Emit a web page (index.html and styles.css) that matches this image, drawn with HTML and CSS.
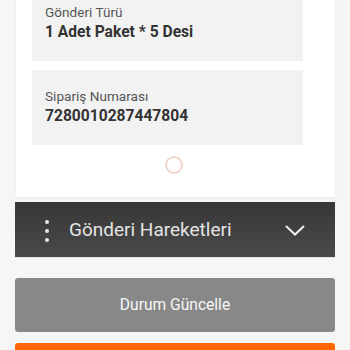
FILE: index.html
```html
<!DOCTYPE html>
<html lang="tr">
<head>
<meta charset="utf-8">
<link rel="stylesheet" href="styles.css">
</head>
<body>
<div class="page">
  <div class="card">
    <div class="info">
      <div class="label">Gönderi Türü</div>
      <div class="value">1 Adet Paket * 5 Desi</div>
    </div>
    <div class="info">
      <div class="label">Sipariş Numarası</div>
      <div class="value">7280010287447804</div>
    </div>
    <div class="spinner-row"><div class="spinner"></div></div>
  </div>
  <div class="accordion">
    <div class="kebab"><span></span><span></span><span></span></div>
    <div class="acc-title">Gönderi Hareketleri</div>
    <svg class="chevron" width="20" height="11" viewBox="0 0 20 11"><path d="M1 1 L10 9.5 L19 1" fill="none" stroke="#f0f0f0" stroke-width="2"/></svg>
  </div>
  <div class="btn-gray">Durum Güncelle</div>
  <div class="btn-orange"></div>
</div>
</body>
</html>
```
FILE: styles.css
```css
html, body {
  margin: 0;
  padding: 0;
  background: #f6f6f6;
  font-family: Roboto, "Liberation Sans", sans-serif;
  overflow: hidden;
}
.page {
  padding: 0 15px;
  display: flex;
  flex-direction: column;
}
.card {
  background: #fff;
  margin: -14px 0 0 1px;
  padding: 0 32px 23px 16px;
  display: flex;
  flex-direction: column;
  gap: 9px;
  box-shadow: 0 1px 3px rgba(0,0,0,0.05);
}
.info {
  background: #f2f2f2;
  padding: 17px 13px 18px;
}
.label {
  font-size: 13.6px;
  line-height: 18px;
  color: #555;
}
.value {
  font-size: 15.6px;
  line-height: 22px;
  font-weight: 700;
  color: #333;
}
.spinner-row {
  display: flex;
  justify-content: center;
  padding-top: 2px;
  padding-left: 12px;
}
.spinner {
  width: 14px;
  height: 14px;
  border: 2px solid #efd6c9;
  border-radius: 50%;
}
.accordion {
  margin-top: 5px;
  height: 56px;
  background: linear-gradient(#373737, #4a4a4a);
  display: flex;
  align-items: center;
  padding: 0 30px 0 30px;
  border-bottom: 1px solid #e2e2e2;
  box-sizing: border-box;
}
.kebab {
  display: flex;
  flex-direction: column;
  gap: 5px;
  width: 4px;
  margin-right: 20px;
  margin-top: 2px;
}
.kebab span {
  width: 4px;
  height: 4px;
  border-radius: 50%;
  background: #e6e6e6;
}
.acc-title {
  flex: 1;
  font-size: 19px;
  color: #e4e4e4;
}
.chevron {
  margin-top: 1px;
}
.btn-gray {
  margin-top: 20px;
  height: 54px;
  background: #888;
  border-radius: 3px;
  color: #f7f7f7;
  font-size: 15.6px;
  display: flex;
  align-items: center;
  justify-content: center;
}
.btn-orange {
  margin-top: 11px;
  height: 30px;
  background: #ff6600;
  border-radius: 3px;
}
```
